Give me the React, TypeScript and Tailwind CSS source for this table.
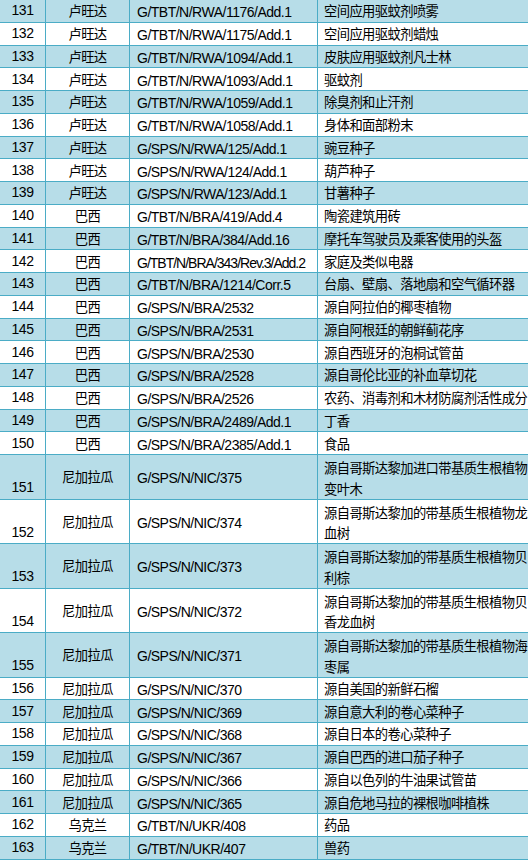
import React from "react";

type Row = { n: number; c: string; code: string; p: string[]; tight?: boolean };

const rows: Row[] = [
  { n: 131, c: "卢旺达", code: "G/TBT/N/RWA/1176/Add.1", p: ["空间应用驱蚊剂喷雾"] },
  { n: 132, c: "卢旺达", code: "G/TBT/N/RWA/1175/Add.1", p: ["空间应用驱蚊剂蜡烛"] },
  { n: 133, c: "卢旺达", code: "G/TBT/N/RWA/1094/Add.1", p: ["皮肤应用驱蚊剂凡士林"] },
  { n: 134, c: "卢旺达", code: "G/TBT/N/RWA/1093/Add.1", p: ["驱蚊剂"] },
  { n: 135, c: "卢旺达", code: "G/TBT/N/RWA/1059/Add.1", p: ["除臭剂和止汗剂"] },
  { n: 136, c: "卢旺达", code: "G/TBT/N/RWA/1058/Add.1", p: ["身体和面部粉末"] },
  { n: 137, c: "卢旺达", code: "G/SPS/N/RWA/125/Add.1", p: ["豌豆种子"] },
  { n: 138, c: "卢旺达", code: "G/SPS/N/RWA/124/Add.1", p: ["葫芦种子"] },
  { n: 139, c: "卢旺达", code: "G/SPS/N/RWA/123/Add.1", p: ["甘薯种子"] },
  { n: 140, c: "巴西", code: "G/TBT/N/BRA/419/Add.4", p: ["陶瓷建筑用砖"] },
  { n: 141, c: "巴西", code: "G/TBT/N/BRA/384/Add.16", p: ["摩托车驾驶员及乘客使用的头盔"] },
  { n: 142, c: "巴西", code: "G/TBT/N/BRA/343/Rev.3/Add.2", p: ["家庭及类似电器"], tight: true },
  { n: 143, c: "巴西", code: "G/TBT/N/BRA/1214/Corr.5", p: ["台扇、壁扇、落地扇和空气循环器"] },
  { n: 144, c: "巴西", code: "G/SPS/N/BRA/2532", p: ["源自阿拉伯的椰枣植物"] },
  { n: 145, c: "巴西", code: "G/SPS/N/BRA/2531", p: ["源自阿根廷的朝鲜蓟花序"] },
  { n: 146, c: "巴西", code: "G/SPS/N/BRA/2530", p: ["源自西班牙的泡桐试管苗"] },
  { n: 147, c: "巴西", code: "G/SPS/N/BRA/2528", p: ["源自哥伦比亚的补血草切花"] },
  { n: 148, c: "巴西", code: "G/SPS/N/BRA/2526", p: ["农药、消毒剂和木材防腐剂活性成分"] },
  { n: 149, c: "巴西", code: "G/SPS/N/BRA/2489/Add.1", p: ["丁香"] },
  { n: 150, c: "巴西", code: "G/SPS/N/BRA/2385/Add.1", p: ["食品"] },
  { n: 151, c: "尼加拉瓜", code: "G/SPS/N/NIC/375", p: ["源自哥斯达黎加进口带基质生根植物", "变叶木"] },
  { n: 152, c: "尼加拉瓜", code: "G/SPS/N/NIC/374", p: ["源自哥斯达黎加的带基质生根植物龙", "血树"] },
  { n: 153, c: "尼加拉瓜", code: "G/SPS/N/NIC/373", p: ["源自哥斯达黎加的带基质生根植物贝", "利棕"] },
  { n: 154, c: "尼加拉瓜", code: "G/SPS/N/NIC/372", p: ["源自哥斯达黎加的带基质生根植物贝", "香龙血树"] },
  { n: 155, c: "尼加拉瓜", code: "G/SPS/N/NIC/371", p: ["源自哥斯达黎加的带基质生根植物海", "枣属"] },
  { n: 156, c: "尼加拉瓜", code: "G/SPS/N/NIC/370", p: ["源自美国的新鲜石榴"] },
  { n: 157, c: "尼加拉瓜", code: "G/SPS/N/NIC/369", p: ["源自意大利的卷心菜种子"] },
  { n: 158, c: "尼加拉瓜", code: "G/SPS/N/NIC/368", p: ["源自日本的卷心菜种子"] },
  { n: 159, c: "尼加拉瓜", code: "G/SPS/N/NIC/367", p: ["源自巴西的进口茄子种子"] },
  { n: 160, c: "尼加拉瓜", code: "G/SPS/N/NIC/366", p: ["源自以色列的牛油果试管苗"] },
  { n: 161, c: "尼加拉瓜", code: "G/SPS/N/NIC/365", p: ["源自危地马拉的裸根咖啡植株"] },
  { n: 162, c: "乌克兰", code: "G/TBT/N/UKR/408", p: ["药品"] },
  { n: 163, c: "乌克兰", code: "G/TBT/N/UKR/407", p: ["兽药"] },
];

const FONT = { fontFamily: '"Liberation Sans", "Noto Sans CJK SC", sans-serif' };

export default function App() {
  return (
    <div className="w-[528px] h-[860px] overflow-hidden bg-white text-black" style={FONT}>
      {rows.map((r) => {
        const dbl = r.p.length > 1;
        const blue = r.n % 2 === 1;
        return (
          <div
            key={r.n}
            className={`grid grid-cols-[46px_84px_188px_1fr] border-b border-[#4bacc6] ${
              blue ? "bg-[#b7dde8]" : "bg-white"
            } ${dbl ? "h-[44.5px]" : "h-[22.75px]"}`}
          >
            <div className="flex items-end justify-center border-r border-[#4bacc6] pb-[3.5px] text-[14px] tracking-[-0.4px] leading-[16px]">
              {r.n}
            </div>
            <div className="flex items-center justify-center border-r border-[#4bacc6] pt-[3px] text-[13.3px] tracking-[-0.6px] leading-[16px] whitespace-nowrap">
              {r.c}
            </div>
            <div
              className={`flex items-center border-r border-[#4bacc6] pl-[7px] pt-[3px] text-[14px] leading-[16px] whitespace-nowrap overflow-hidden ${
                r.tight ? "tracking-[-1px]" : "tracking-[-0.5px]"
              }`}
            >
              {r.code}
            </div>
            <div
              className={`flex flex-col justify-center pl-[6px] text-[13.3px] tracking-[-0.6px] whitespace-nowrap overflow-hidden ${
                dbl ? "pt-[6px] leading-[20.5px]" : "pt-[3px] leading-[16px]"
              }`}
            >
              {r.p.map((t, i) => (
                <span key={i}>{t}</span>
              ))}
            </div>
          </div>
        );
      })}
    </div>
  );
}
